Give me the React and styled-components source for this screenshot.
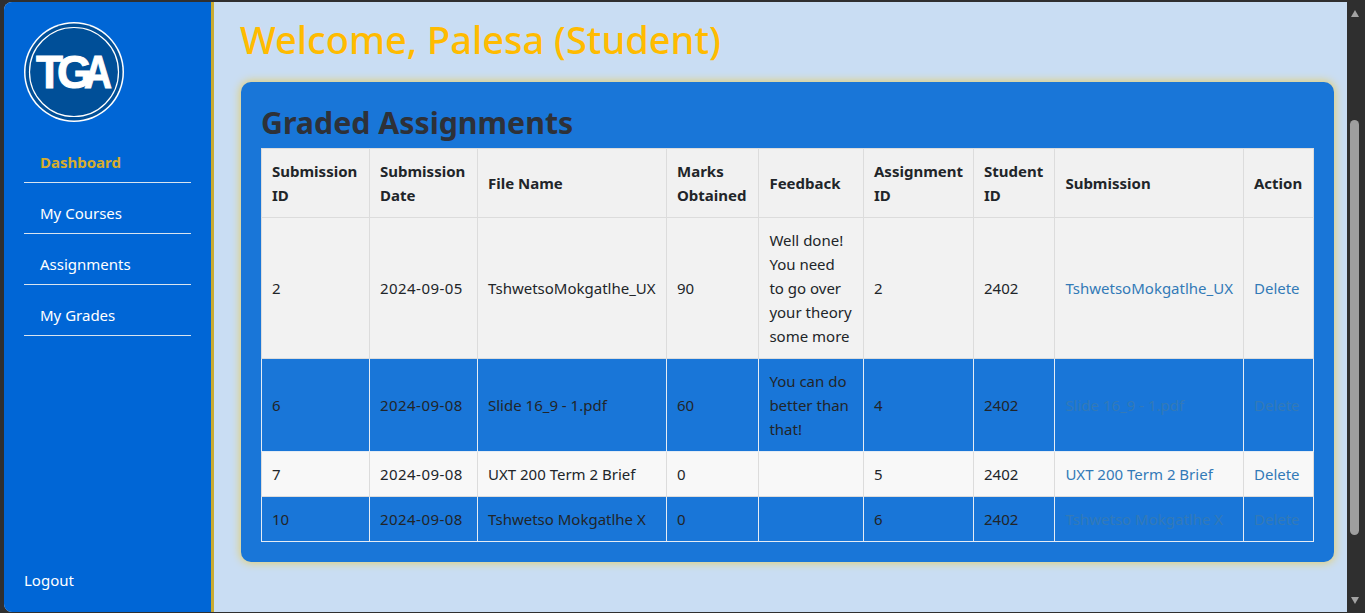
import React from 'react'
import styled, { createGlobalStyle } from 'styled-components'

const GlobalStyle = createGlobalStyle`
  html, body {
    margin: 0;
    height: 100%;
    overflow: hidden;
    background: #2f2f2f;
  }
  * {
    box-sizing: border-box;
  }
`

// Styles
const Frame = styled.div`
  display: flex;
  width: 1365px;
  height: 613px;
  padding: 2px 3px 1px 4px;
  background: #2f2f2f;
  font-family: "Noto Sans", "Open Sans", sans-serif;
  font-size: 16px;
  line-height: 24px;
  color: #212529;
`

const Page = styled.div`
  display: flex;
  flex: 1;
  min-width: 0;
  overflow: hidden;
  border-top-left-radius: 8px;
  border-bottom-left-radius: 8px;
  background: #c9ddf3;
`

const Sidebar = styled.aside`
  display: flex;
  flex-direction: column;
  flex: 0 0 210px;
  padding: 20px 20px 20px;
  background: #0066d6;
  border-right: 3px solid #c9ab32;
`

const Logo = styled.svg`
  display: block;
  width: 100px;
  height: 100px;
  flex: none;
`

const LogoText = styled.text`
  font-family: "Liberation Sans", sans-serif;
  font-weight: 700;
  font-size: 46px;
  fill: #fff;
  stroke: #fff;
  stroke-width: 1px;
`

const Nav = styled.nav`
  display: flex;
  flex-direction: column;
  flex: 1;
  width: 167px;
  margin-top: 10px;
`

const NavLink = styled.a`
  display: block;
  height: 51px;
  padding: 18px 16px 0;
  border-bottom: 1px solid #d8e4f0;
  font-size: 15px;
  font-weight: ${props => (props.$active ? 700 : 400)};
  color: ${props => (props.$active ? '#d6ad2e' : '#fff')};
`

const Logout = styled.a`
  display: block;
  font-size: 15px;
  color: #fff;
`

const Main = styled.main`
  flex: 1;
  min-width: 0;
  padding: 12px 13px 0 27px;
`

const Title = styled.h1`
  margin: 0 0 17px -1px;
  height: 51px;
  font-size: 38px;
  line-height: 50px;
  font-weight: 500;
  color: #ffbb00;
`

const Card = styled.section`
  padding: 20px;
  height: 480px;
  border-radius: 10px;
  background: #1976d8;
  box-shadow: 0 0 8px 1px #e4cf6e;
`

const Heading = styled.h2`
  margin: 0;
  height: 46px;
  font-size: 30.3px;
  line-height: 41px;
  font-weight: 700;
  color: #2e3138;
`

const Table = styled.table`
  width: 1052px;
  table-layout: fixed;
  border-collapse: collapse;
`

const Row = styled.tr`
  background: ${props => props.$bg};
`

const Head = styled.th`
  padding: 10px;
  text-align: left;
  font-size: 15px;
  font-weight: 700;
  background: #f1f1f1;
  border: 1px solid #dcdcdc;
  width: ${props => props.$width}px;
`

const Cell = styled.td`
  padding: 10px;
  font-size: 15px;
  letter-spacing: ${props => (props.$digits ? '0.45px' : '0')};
  white-space: ${props => (props.$wrap ? 'normal' : 'nowrap')};
  border: 1px solid ${props => (props.$dim ? '#e4ecf5' : '#dcdcdc')};
`

const FileLink = styled.a`
  color: #337ab7;
`

const Scrollbar = styled.div`
  display: flex;
  flex-direction: column;
  align-items: center;
  flex: 0 0 15px;
  height: 100%;
  background: #2f2f2f;
`

const ArrowUp = styled.div`
  flex: none;
  margin-top: 8px;
  border-left: 4.5px solid transparent;
  border-right: 4.5px solid transparent;
  border-bottom: 7px solid #a3a3a3;
`

const Thumb = styled.div`
  flex: none;
  width: 9px;
  height: 415px;
  margin-top: 103px;
  border-radius: 5px;
  background: #9e9e9e;
`

const ArrowDown = styled.div`
  flex: none;
  margin-top: 62px;
  border-left: 4.5px solid transparent;
  border-right: 4.5px solid transparent;
  border-top: 7px solid #a3a3a3;
`

const columns = [
  { label: <>Submission<br />ID</>, width: 108 },
  { label: <>Submission<br />Date</>, width: 108 },
  { label: 'File Name', width: 189 },
  { label: <>Marks<br />Obtained</>, width: 92.4 },
  { label: 'Feedback', width: 104.6 },
  { label: <>Assignment<br />ID</>, width: 110 },
  { label: <>Student<br />ID</>, width: 81.4 },
  { label: 'Submission', width: 188.6 },
  { label: 'Action', width: 70 }
]

const submissions = [
  { id: 2, date: '2024-09-05', file: 'TshwetsoMokgatlhe_UX', marks: 90, feedback: <>Well done!<br />You need<br />to go over<br />your theory<br />some more</>, assignment: 2, bg: '#f2f2f2' },
  { id: 6, date: '2024-09-08', file: 'Slide 16_9 - 1.pdf', marks: 60, feedback: <>You can do<br />better than<br />that!</>, assignment: 4, bg: '#1976d8', dim: true },
  { id: 7, date: '2024-09-08', file: 'UXT 200 Term 2 Brief', marks: 0, feedback: '', assignment: 5, bg: '#f8f8f8' },
  { id: 10, date: '2024-09-08', file: 'Tshwetso Mokgatlhe X', marks: 0, feedback: '', assignment: 6, bg: '#1976d8', dim: true }
]

const navItems = ['Dashboard', 'My Courses', 'Assignments', 'My Grades']

const App = () => (
  <Frame>
    <GlobalStyle />
    <Page>
      <Sidebar>
        <Logo viewBox="0 0 100 100">
          <circle cx="50" cy="50" r="50" fill="#fff" />
          <circle cx="50" cy="50" r="48.5" fill="#004f98" />
          <circle cx="50" cy="50" r="44.5" fill="none" stroke="#fff" strokeWidth="1.2" />
          <LogoText y="66">
            <tspan x="12" textLength="27" lengthAdjust="spacingAndGlyphs">T</tspan>
            <tspan x="33" textLength="35" lengthAdjust="spacingAndGlyphs">G</tspan>
            <tspan x="60" textLength="28" lengthAdjust="spacingAndGlyphs">A</tspan>
          </LogoText>
        </Logo>
        <Nav>
          {navItems.map((item, i) => (
            <NavLink key={item} $active={i === 0}>{item}</NavLink>
          ))}
        </Nav>
        <Logout>Logout</Logout>
      </Sidebar>
      <Main>
        <Title>Welcome, Palesa (Student)</Title>
        <Card>
          <Heading>Graded Assignments</Heading>
          <Table>
            <thead>
              <tr>
                {columns.map((col, i) => (
                  <Head key={i} $width={col.width}>{col.label}</Head>
                ))}
              </tr>
            </thead>
            <tbody>
              {submissions.map(row => (
                <Row key={row.id} $bg={row.bg}>
                  <Cell $dim={row.dim}>{row.id}</Cell>
                  <Cell $dim={row.dim} $digits>{row.date}</Cell>
                  <Cell $dim={row.dim}>{row.file}</Cell>
                  <Cell $dim={row.dim}>{row.marks}</Cell>
                  <Cell $dim={row.dim} $wrap>{row.feedback}</Cell>
                  <Cell $dim={row.dim}>{row.assignment}</Cell>
                  <Cell $dim={row.dim}>2402</Cell>
                  <Cell $dim={row.dim}><FileLink>{row.file}</FileLink></Cell>
                  <Cell $dim={row.dim}><FileLink>Delete</FileLink></Cell>
                </Row>
              ))}
            </tbody>
          </Table>
        </Card>
      </Main>
    </Page>
    <Scrollbar>
      <ArrowUp />
      <Thumb />
      <ArrowDown />
    </Scrollbar>
  </Frame>
)

export default App
